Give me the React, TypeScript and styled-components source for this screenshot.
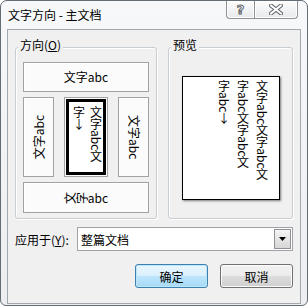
import React from 'react';
import styled, { createGlobalStyle } from 'styled-components';

const GlobalStyle = createGlobalStyle`
    html, body {
        margin: 0;
        padding: 0;
        background: #ffffff;
    }
    body {
        font-family: "Noto Sans CJK SC", "Microsoft YaHei", sans-serif;
        font-size: 12px;
        color: #000;
    }
    * {
        box-sizing: border-box;
    }
`;

const App: React.FC = () => {
    return (
        <>
            <GlobalStyle />
            <StyledWindow>
                <StyledTitleBar>
                    <StyledTitle>文字方向 - 主文档</StyledTitle>
                    <StyledTitleButtons>
                        <StyledHelpButton>
                            <StyledHelpGlyph>?</StyledHelpGlyph>
                        </StyledHelpButton>
                        <StyledCloseButton>
                            <svg width="14" height="11" viewBox="0 0 14 11">
                                <path d="M2 1.5 L12 9.5 M12 1.5 L2 9.5" stroke="#5a5e63" strokeWidth="4" strokeLinecap="square" />
                                <path d="M2 1.5 L12 9.5 M12 1.5 L2 9.5" stroke="#ffffff" strokeWidth="2" strokeLinecap="square" />
                            </svg>
                        </StyledCloseButton>
                    </StyledTitleButtons>
                </StyledTitleBar>

                <StyledClient>
                    <StyledGroupsRow>
                        <StyledGroup $width={142}>
                            <StyledCaption>
                                方向(<u>O</u>)
                            </StyledCaption>
                            <StyledOptionButton $height={30}>文字abc</StyledOptionButton>
                            <StyledOptionRow>
                                <StyledOptionButton $width={31} $height={80}>
                                    <StyledSideText $flip>文字abc</StyledSideText>
                                </StyledOptionButton>
                                <StyledSelectedOption>
                                    <StyledVerticalText $lineHeight={17}>
                                        文字abc文
                                        <br />
                                        字<StyledUpright>↓</StyledUpright>
                                    </StyledVerticalText>
                                </StyledSelectedOption>
                                <StyledOptionButton $width={31} $height={80}>
                                    <StyledSideText>文字abc</StyledSideText>
                                </StyledOptionButton>
                            </StyledOptionRow>
                            <StyledOptionButton $height={31}>
                                <StyledRotated>文</StyledRotated>
                                <StyledRotated>字</StyledRotated>
                                abc
                            </StyledOptionButton>
                        </StyledGroup>

                        <StyledGroup $width={125}>
                            <StyledCaption>预览</StyledCaption>
                            <StyledPreviewPage>
                                文字abc文字abc文
                                <br />
                                字abc文字abc文
                                <br />
                                字abc<StyledUpright>↓</StyledUpright>
                            </StyledPreviewPage>
                        </StyledGroup>
                    </StyledGroupsRow>

                    <StyledApplyRow>
                        <StyledApplyLabel>
                            应用于(<u>Y</u>):
                        </StyledApplyLabel>
                        <StyledCombo>
                            <StyledComboValue>整篇文档</StyledComboValue>
                            <StyledComboArrow>
                                <svg width="7" height="4" viewBox="0 0 7 4">
                                    <path d="M0 0 H7 L3.5 4 Z" fill="#000" />
                                </svg>
                            </StyledComboArrow>
                        </StyledCombo>
                    </StyledApplyRow>

                    <StyledButtonRow>
                        <StyledPushButton $primary>确定</StyledPushButton>
                        <StyledPushButton>取消</StyledPushButton>
                    </StyledButtonRow>
                </StyledClient>
            </StyledWindow>
        </>
    );
};

const StyledWindow = styled.div`
    width: 308px;
    height: 306px;
    display: flex;
    flex-direction: column;
    border: 1px solid #646c74;
    border-radius: 7px 7px 6px 6px;
    padding: 0 6px 1px;
    background: linear-gradient(#f7f8fa, #eceef1);
    overflow: hidden;
`;

const StyledTitleBar = styled.div`
    height: 28px;
    flex: none;
    display: flex;
    align-items: flex-start;
`;

const StyledTitle = styled.div`
    padding-left: 1px;
    line-height: 28px;
    font-size: 12px;
    color: #000;
`;

const StyledTitleButtons = styled.div`
    margin-left: auto;
    margin-right: 3px;
    display: flex;
`;

const StyledTitleButtonBase = styled.div`
    height: 18px;
    display: flex;
    align-items: center;
    justify-content: center;
    border: 1px solid #8d9298;
    border-top: none;
    background: linear-gradient(#fdfdfd, #e7e9ec);
    box-shadow: inset 0 0 0 1px #ffffff;
`;

const StyledHelpButton = styled(StyledTitleButtonBase)`
    width: 29px;
    border-radius: 0 0 0 4px;
`;

const StyledCloseButton = styled(StyledTitleButtonBase)`
    width: 43px;
    border-left: none;
    border-radius: 0 0 4px 0;
`;

const StyledHelpGlyph = styled.span`
    font-family: "DejaVu Sans", sans-serif;
    font-size: 13px;
    font-weight: bold;
    line-height: 1;
    color: #ffffff;
    -webkit-text-stroke: 1px #5a5e63;
`;

const StyledClient = styled.div`
    flex: 1;
    display: flex;
    flex-direction: column;
    border: 1px solid #a3a8ae;
    background: #f0f0f0;
    padding: 17px 7px 0;
`;

const StyledGroupsRow = styled.div`
    display: flex;
    gap: 11px;
    align-items: stretch;
`;

const StyledGroup = styled.div<{ $width: number }>`
    width: ${props => props.$width}px;
    display: flex;
    flex-direction: column;
    padding: 0 7px 5px;
    border: 1px solid #c6cdd3;
    border-radius: 3px;
    box-shadow: inset 1px 1px 0 #ffffff, 1px 1px 0 #ffffff;
`;

const StyledCaption = styled.div`
    align-self: flex-start;
    margin: -11px 0 9px -5px;
    padding: 0 2px;
    line-height: 16px;
    background: #f0f0f0;
`;

const StyledOptionRow = styled.div`
    display: flex;
    justify-content: space-between;
    margin: 5px 0;
`;

const StyledOptionButton = styled.div<{ $width?: number; $height: number }>`
    width: ${props => (props.$width ? `${props.$width}px` : 'auto')};
    height: ${props => props.$height}px;
    display: flex;
    align-items: center;
    justify-content: center;
    border: 1px solid #a2a2a2;
    background: #fbfbfb;
    box-shadow: inset 1px 1px 0 #ffffff;
    font-size: 12px;
    line-height: 1;
`;

const StyledSelectedOption = styled.div`
    width: 44px;
    height: 80px;
    display: flex;
    align-items: flex-start;
    justify-content: center;
    padding: 8px 0 0 3px;
    border: 1px solid #a2a2a2;
    background: #ffffff;
    box-shadow: inset 0 0 0 1px #ffffff, inset 0 0 0 4px #000000;
`;

const StyledVerticalText = styled.div<{ $lineHeight: number }>`
    writing-mode: vertical-rl;
    line-height: ${props => props.$lineHeight}px;
    font-size: 12px;
    white-space: nowrap;
`;

const StyledSideText = styled.div<{ $flip?: boolean }>`
    writing-mode: vertical-rl;
    text-orientation: sideways;
    white-space: nowrap;
    line-height: 14px;
    transform: ${props => (props.$flip ? 'rotate(180deg)' : 'none')};
`;

const StyledUpright = styled.span`
    text-orientation: upright;
`;

const StyledRotated = styled.span`
    display: inline-block;
    transform: rotate(-90deg);
`;

const StyledPreviewPage = styled.div`
    align-self: center;
    width: 98px;
    height: 124px;
    margin-top: 14px;
    padding: 3px 7px 0 0;
    border: 1px solid #000000;
    background: #ffffff;
    box-shadow: 1px 1px 2px #7a7a7a;
    writing-mode: vertical-rl;
    line-height: 19px;
    font-size: 12px;
    white-space: nowrap;
`;

const StyledApplyRow = styled.div`
    display: flex;
    align-items: center;
    margin-top: 8px;
`;

const StyledApplyLabel = styled.div`
    width: 62px;
    flex: none;
    white-space: nowrap;
`;

const StyledCombo = styled.div`
    flex: 1;
    height: 24px;
    display: flex;
    align-items: stretch;
    border: 1px solid #9fa3a8;
    background: #ffffff;
    padding: 1px;
`;

const StyledComboValue = styled.div`
    flex: 1;
    display: flex;
    align-items: center;
    padding-left: 2px;
`;

const StyledComboArrow = styled.div`
    width: 17px;
    display: flex;
    align-items: center;
    justify-content: center;
    border: 1px solid #8e9297;
    background: linear-gradient(#f4f4f4, #d7d7d7);
`;

const StyledButtonRow = styled.div`
    display: flex;
    justify-content: flex-end;
    gap: 12px;
    margin-top: 13px;
`;

const StyledPushButton = styled.div<{ $primary?: boolean }>`
    width: 73px;
    height: 24px;
    display: flex;
    align-items: center;
    justify-content: center;
    border: 1px solid ${props => (props.$primary ? '#3c7fb1' : '#707070')};
    border-radius: 3px;
    background: ${props =>
        props.$primary
            ? 'linear-gradient(#eaf6fd 0%, #d9f0fc 50%, #bee6fd 50%, #a7d9f5 100%)'
            : 'linear-gradient(#f2f2f2 0%, #ebebeb 50%, #dddddd 50%, #cfcfcf 100%)'};
    box-shadow: inset 0 0 0 1px ${props => (props.$primary ? '#bde6fb' : '#fcfcfc')};
    font-size: 12px;
`;

export default App;
